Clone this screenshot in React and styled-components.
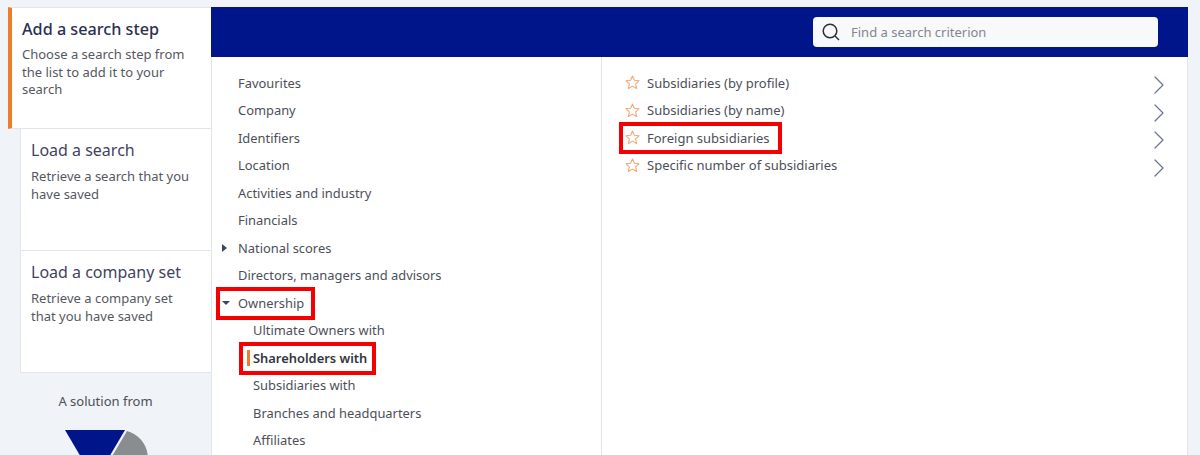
import React from 'react';
import styled, { createGlobalStyle } from 'styled-components';
import { ChevronRight } from 'lucide-react';

const GlobalStyle = createGlobalStyle`
  html, body {
    margin: 0;
    padding: 0;
    background: #f0f3f7;
    font-family: "Noto Sans", "Open Sans", sans-serif;
    color: #4a4f5e;
  }
`;

const Page = styled.div`
  display: flex;
  height: 448px;
  padding: 7px 12px 0 8px;
  overflow: hidden;
`;

const Sidebar = styled.aside`
  flex: 0 0 203px;
  display: flex;
  flex-direction: column;
`;

const StepCard = styled.div`
  flex: none;
  height: 122px;
  box-sizing: border-box;
  background: #fff;
  border-bottom: 1px solid #e2e6ec;
  margin-left: ${(p) => (p.$active ? '0' : '12px')};
  padding: ${(p) => (p.$active ? '10px 20px 0 10px' : '10px 16px 0 10px')};
  border-left: ${(p) => (p.$active ? '4px solid #ee7d2b' : '1px solid #e2e6ec')};
  border-top: ${(p) => (p.$active ? '1px solid #e2e6ec' : '0')};
`;

const StepTitle = styled.div`
  line-height: 22px;
  font-size: ${(p) => (p.$active ? '16.2px' : '16px')};
  margin-bottom: ${(p) => (p.$active ? '6px' : '7px')};
  font-weight: ${(p) => (p.$active ? 500 : 400)};
  color: ${(p) => (p.$active ? '#2b2f52' : '#3f4360')};
`;

const StepText = styled.div`
  font-size: 13px;
  line-height: 17.5px;
  color: #55585f;
`;

const Solution = styled.div`
  flex: none;
  margin-top: 19px;
  padding-right: 8px;
  display: flex;
  flex-direction: column;
  align-items: center;
  font-size: 13px;
  line-height: 18px;
  color: #4c4f55;
  svg {
    margin: 20px 0 0 4px;
    flex: none;
  }
`;

const Main = styled.main`
  flex: 1;
  display: flex;
  flex-direction: column;
  background: #fff;
`;

const TopBar = styled.header`
  flex: 0 0 50px;
  box-sizing: border-box;
  display: flex;
  justify-content: flex-end;
  align-items: center;
  padding-right: 30px;
  background: #00158a;
`;

const SearchBox = styled.div`
  width: 345px;
  height: 30px;
  box-sizing: border-box;
  display: flex;
  align-items: center;
  gap: 11px;
  padding-left: 9px;
  background: #f8f9fb;
  border-radius: 4px;
  font-size: 13px;
  color: #82868e;
`;

const SearchIcon = styled.svg`
  flex: none;
  fill: none;
  stroke: #2c2f36;
  stroke-width: 1.5;
`;

const Columns = styled.div`
  flex: 1;
  display: flex;
  min-height: 0;
  border-left: 1px solid #e2e6ec;
  border-right: 1px solid #e2e6ec;
`;

const NavColumn = styled.nav`
  flex: 0 0 390px;
  box-sizing: border-box;
  border-right: 1px solid #e2e6ec;
  padding: 12px 0 0 26px;
  font-size: 12.9px;
`;

const ListColumn = styled.section`
  flex: 1;
  padding: 12px 12px 0 23px;
  font-size: 13px;
`;

const Row = styled.div`
  position: relative;
  display: flex;
  align-items: center;
  height: 27.5px;
  color: #4c4f5a;
  white-space: nowrap;
  padding-left: ${(p) => (p.$sub ? '15px' : '0')};
  font-weight: ${(p) => (p.$current ? 600 : 400)};
  ${(p) => p.$current && 'color: #33363f;'}
`;

const Caret = styled.span`
  position: absolute;
  left: -16px;
  top: 50%;
  width: 0;
  height: 0;
  ${(p) =>
    p.$open
      ? `margin-top: -2px;
         border-left: 4px solid transparent;
         border-right: 4px solid transparent;
         border-top: 4px solid #3f4560;`
      : `margin-top: -4px;
         border-top: 4px solid transparent;
         border-bottom: 4px solid transparent;
         border-left: 5px solid #3f4560;`}
`;

const CurrentMark = styled.span`
  position: absolute;
  left: 9px;
  top: 6px;
  bottom: 6px;
  width: 3px;
  background: #ee7d2b;
`;

const Highlight = styled.span`
  position: absolute;
  top: ${(p) => p.$top}px;
  left: ${(p) => p.$left}px;
  width: ${(p) => p.$width}px;
  height: ${(p) => p.$height}px;
  box-sizing: border-box;
  border: 4px solid #f50000;
  pointer-events: none;
`;

const Star = styled.svg`
  flex: none;
  margin-right: 7px;
  fill: none;
  stroke: #f2a878;
  stroke-width: 1.1;
  stroke-linejoin: round;
`;

const RowLabel = styled.span`
  flex: 1;
`;

const Chevron = styled(ChevronRight)`
  flex: none;
  margin: -1px 0 -6px;
  color: #6b7490;
`;

const navItems = [
  { label: 'Favourites' },
  { label: 'Company' },
  { label: 'Identifiers' },
  { label: 'Location' },
  { label: 'Activities and industry' },
  { label: 'Financials' },
  { label: 'National scores', caret: 'closed' },
  { label: 'Directors, managers and advisors' },
  { label: 'Ownership', caret: 'open', box: { top: -2, left: -22, width: 99, height: 33 } },
  { label: 'Ultimate Owners with', sub: true },
  { label: 'Shareholders with', sub: true, current: true, box: { top: -2, left: 1, width: 137, height: 33 } },
  { label: 'Subsidiaries with', sub: true },
  { label: 'Branches and headquarters', sub: true },
  { label: 'Affiliates', sub: true },
];

const criteria = [
  { label: 'Subsidiaries (by profile)' },
  { label: 'Subsidiaries (by name)' },
  { label: 'Foreign subsidiaries', box: { top: -2, left: -6, width: 163, height: 32 } },
  { label: 'Specific number of subsidiaries' },
];

export default function App() {
  return (
    <>
      <GlobalStyle />
      <Page>
        <Sidebar>
          <StepCard $active>
            <StepTitle $active>Add a search step</StepTitle>
            <StepText>Choose a search step from the list to add it to your search</StepText>
          </StepCard>
          <StepCard>
            <StepTitle>Load a search</StepTitle>
            <StepText>Retrieve a search that you have saved</StepText>
          </StepCard>
          <StepCard>
            <StepTitle>Load a company set</StepTitle>
            <StepText>Retrieve a company set that you have saved</StepText>
          </StepCard>
          <Solution>
            A solution from
            <svg width="85" height="60" viewBox="0 0 85 60">
              <path d="M0 0H60L30 51Z" fill="#00158a" />
              <path d="M62 1C75 5 83 15 83 30V40H39Z" fill="#8a8d8f" />
            </svg>
          </Solution>
        </Sidebar>
        <Main>
          <TopBar>
            <SearchBox>
              <SearchIcon width="18" height="18" viewBox="0 0 18 18">
                <circle cx="8" cy="8" r="6.8" />
                <path d="M13 13l4 4" />
              </SearchIcon>
              Find a search criterion
            </SearchBox>
          </TopBar>
          <Columns>
            <NavColumn>
              {navItems.map((item) => (
                <Row key={item.label} $sub={item.sub} $current={item.current}>
                  {item.caret && <Caret $open={item.caret === 'open'} />}
                  {item.current && <CurrentMark />}
                  {item.label}
                  {item.box && (
                    <Highlight
                      $top={item.box.top}
                      $left={item.box.left}
                      $width={item.box.width}
                      $height={item.box.height}
                    />
                  )}
                </Row>
              ))}
            </NavColumn>
            <ListColumn>
              {criteria.map((item) => (
                <Row key={item.label}>
                  <Star width="15" height="15" viewBox="0 0 15 15">
                    <path d="M7.5 1l1.9 4.3 4.6.5-3.4 3.1 1 4.6-4.1-2.4-4.1 2.4 1-4.6L1 5.8l4.6-.5z" />
                  </Star>
                  <RowLabel>{item.label}</RowLabel>
                  <Chevron size={32} strokeWidth={0.9} />
                  {item.box && (
                    <Highlight
                      $top={item.box.top}
                      $left={item.box.left}
                      $width={item.box.width}
                      $height={item.box.height}
                    />
                  )}
                </Row>
              ))}
            </ListColumn>
          </Columns>
        </Main>
      </Page>
    </>
  );
}
